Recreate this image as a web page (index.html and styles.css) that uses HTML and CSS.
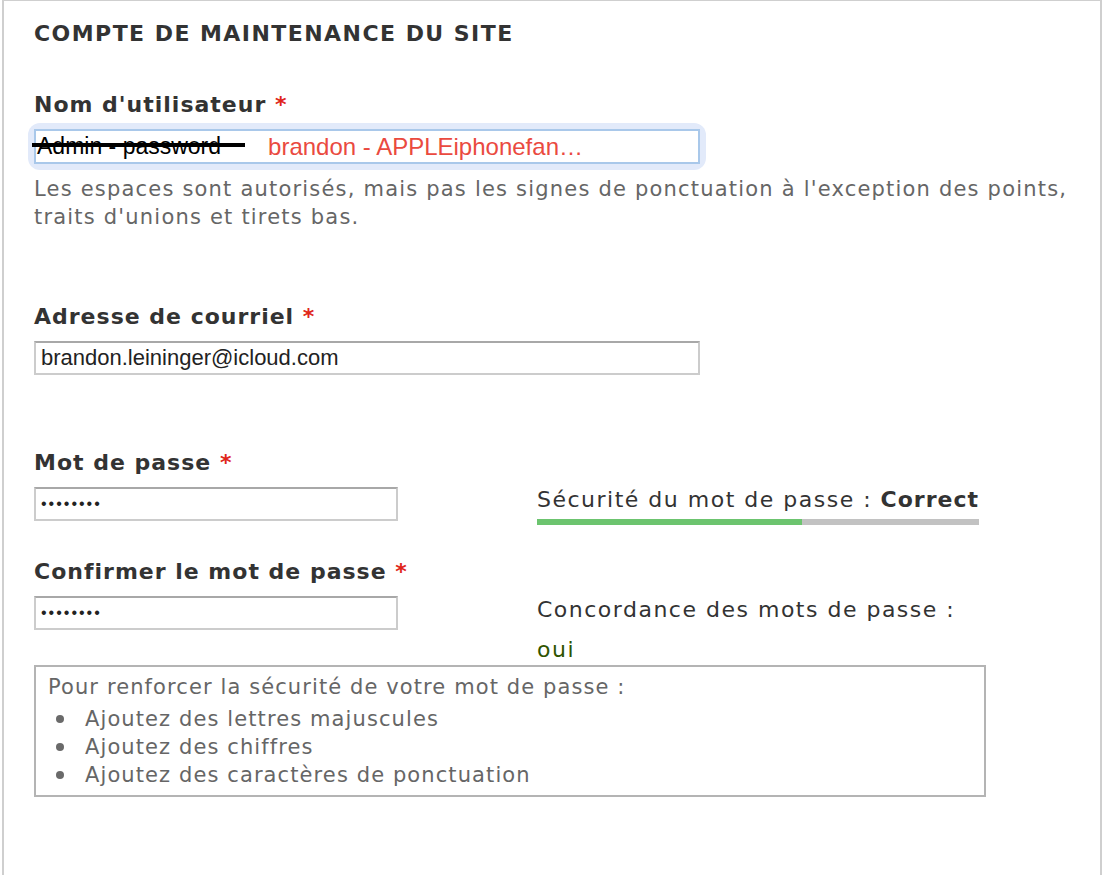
FILE: index.html
```html
<!DOCTYPE html>
<html lang="fr">
<head>
<meta charset="utf-8">
<title>Compte de maintenance du site</title>
<link rel="stylesheet" href="styles.css">
</head>
<body>
<div class="panel">
  <h2 class="panel-title">COMPTE DE MAINTENANCE DU SITE</h2>

  <div class="field field-user">
    <label class="label">Nom d'utilisateur <span class="req">*</span></label>
    <div class="focus-ring">
      <div class="input input-user">
        <span class="struck">Admin - password</span>
        <span class="red-note">brandon - APPLEiphonefan…</span>
      </div>
    </div>
    <div class="description">Les espaces sont autorisés, mais pas les signes de ponctuation à l'exception des points, traits d'unions et tirets bas.</div>
  </div>

  <div class="field field-mail">
    <label class="label">Adresse de courriel <span class="req">*</span></label>
    <input class="input input-wide" type="text" value="brandon.leininger@icloud.com">
  </div>

  <div class="field field-pass">
    <label class="label">Mot de passe <span class="req">*</span></label>
    <div class="pass-row">
      <input class="input input-short" type="password" value="12345678">
      <div class="side side-strength">
        <div class="side-text">Sécurité du mot de passe : <strong>Correct</strong></div>
        <div class="meter"><div class="meter-fill" style="width:60%"></div></div>
      </div>
    </div>
  </div>

  <div class="field field-confirm">
    <label class="label">Confirmer le mot de passe <span class="req">*</span></label>
    <div class="pass-row">
      <input class="input input-short" type="password" value="12345678">
      <div class="side">
        <div class="side-text">Concordance des mots de passe :</div>
        <div class="side-text ok">oui</div>
      </div>
    </div>
  </div>

  <div class="suggestions">
    <div class="sugg-title">Pour renforcer la sécurité de votre mot de passe :</div>
    <ul class="sugg-list">
      <li>Ajoutez des lettres majuscules</li>
      <li>Ajoutez des chiffres</li>
      <li>Ajoutez des caractères de ponctuation</li>
    </ul>
  </div>
</div>
</body>
</html>
```

FILE: styles.css
```css
html, body {
  margin: 0;
  padding: 0;
  background: #fff;
}
body {
  font-family: "DejaVu Sans", sans-serif;
  color: #333;
}
.panel {
  margin: 0 2px;
  border: 2px solid #cfcfcf;
  border-top-width: 1px;
  border-bottom: none;
  min-height: 875px;
  box-sizing: border-box;
  padding: 19px 30px 0 30px;
}
.panel-title {
  margin: 0;
  font-size: 22px;
  line-height: 28px;
  font-weight: 700;
  letter-spacing: 1.45px;
  color: #333;
}
.label {
  display: block;
  font-size: 22px;
  line-height: 28px;
  font-weight: 700;
  letter-spacing: 1px;
  color: #333;
  margin-bottom: 10px;
}
.req {
  color: #e0261b;
}
.field-user { margin-top: 43px; }
.field-mail { margin-top: 72px; }
.field-pass { margin-top: 74px; }
.field-confirm { margin-top: 33px; }

.input {
  display: block;
  box-sizing: border-box;
  height: 34px;
  border: 2px solid #cccccc;
  border-top-color: #a8a8a8;
  padding: 0 5px;
  font-family: "Liberation Sans", Arial, sans-serif;
  font-size: 22px;
  color: #222;
  background: #fff;
  outline: none;
  margin: 0;
}
.input-wide { width: 666px; }
.input-short {
  width: 364px;
  font-size: 16px;
  letter-spacing: 2px;
}
.focus-ring {
  width: 666px;
  padding: 0;
  border-radius: 6px;
  box-shadow: 0 0 0 6px #e2eafa;
}
.input-user {
  width: 666px;
  height: 35px;
  border: 2px solid #a9c8ea;
  display: flex;
  align-items: center;
  gap: 47px;
  padding-left: 1px;
  color: #000;
}
.struck {
  position: relative;
  font-size: 23px;
}
.struck::after {
  content: "";
  position: absolute;
  left: -5px;
  right: -24px;
  top: 10px;
  height: 4px;
  background: #000;
}
.red-note {
  color: #ea4a3f;
  font-size: 24px;
}
.description {
  margin-top: 11px;
  font-size: 21px;
  letter-spacing: 1.2px;
  line-height: 28px;
  color: #666;
}
.pass-row {
  display: flex;
  align-items: flex-start;
}
.side {
  margin-left: 139px;
  width: 442px;
}
.side-strength {
  margin-top: -1px;
}
.side-text {
  font-size: 22px;
  letter-spacing: 1.5px;
  line-height: 28px;
  color: #333;
}
.side-text strong { font-weight: 700; letter-spacing: 1px; }
.ok { color: #2f5400; margin-top: 12px; }
.meter {
  margin-top: 5px;
  height: 6px;
  background: #c2c2c2;
}
.meter-fill {
  height: 100%;
  background: #6cc46f;
}
.suggestions {
  margin-top: 1px;
  width: 952px;
  box-sizing: border-box;
  border: 2px solid #b4b4b4;
  padding: 6px 12px 6px 12px;
  color: #666;
  font-size: 21px;
  letter-spacing: 1.1px;
  line-height: 28px;
}
.sugg-title { margin-bottom: 4px; }
.sugg-list {
  margin: 0;
  padding: 0;
  list-style: none;
}
.sugg-list li {
  margin: 0;
  display: flex;
  align-items: center;
}
.sugg-list li::before {
  content: "";
  flex: none;
  width: 8px;
  height: 8px;
  border-radius: 50%;
  background: #6a6a6a;
  margin-left: 8px;
  margin-right: 21px;
}
```
